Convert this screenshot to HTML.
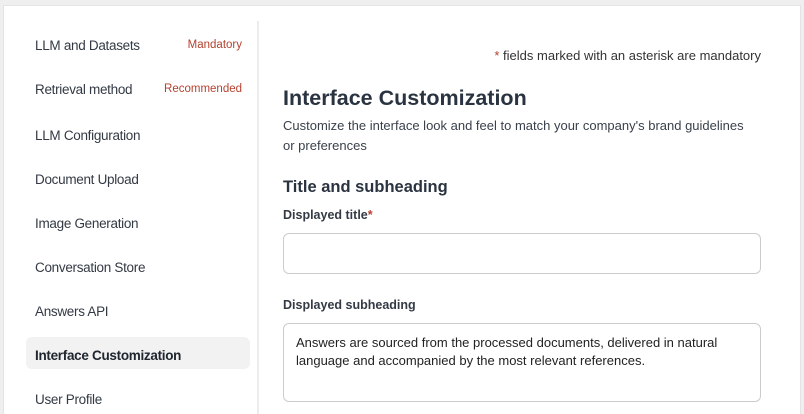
<!DOCTYPE html>
<html><head><meta charset="utf-8"><style>
*{box-sizing:border-box;margin:0;padding:0}
html,body{width:804px;height:414px;overflow:hidden}
body{background:#efefef;font-family:"Liberation Sans",sans-serif;position:relative;color:#2f3540}
.card{position:absolute;left:3px;top:5px;width:798px;height:409px;background:#fff;border:1px solid #e4e4e4;border-bottom:none}
.div{position:absolute;left:257px;top:21px;width:2px;height:393px;background:#ececec}
.nav{position:absolute;left:35px;font-size:13.5px;color:#333a44;letter-spacing:-0.3px}
.tag{position:absolute;font-size:11.5px;color:#b5412e;right:562px}
.active{position:absolute;left:26px;top:337px;width:224px;height:32px;background:#f2f2f2;border-radius:6px}
.r{position:absolute;left:283px}
.box{position:absolute;left:283px;width:478px;border:1px solid #ccc;border-radius:6px}
</style></head><body>
<div class="card"></div>
<div class="div"></div>
<div class="active"></div>
<div class="nav" style="top:38px">LLM and Datasets</div>
<div class="tag" style="top:39px">Mandatory</div>
<div class="nav" style="top:82px">Retrieval method</div>
<div class="tag" style="top:83px">Recommended</div>
<div class="nav" style="top:128px">LLM Configuration</div>
<div class="nav" style="top:172px">Document Upload</div>
<div class="nav" style="top:216px">Image Generation</div>
<div class="nav" style="top:260px">Conversation Store</div>
<div class="nav" style="top:304px">Answers API</div>
<div class="nav" style="top:348px;font-weight:bold;color:#20262e">Interface Customization</div>
<div class="nav" style="top:392px">User Profile</div>
<div style="position:absolute;right:43px;top:48px;font-size:13px;color:#333"><span style="color:#b5412e">*</span> fields marked with an asterisk are mandatory</div>
<div class="r" style="top:86px;font-size:21.5px;font-weight:bold;color:#2a3340">Interface Customization</div>
<div class="r" style="top:116px;font-size:13px;line-height:20px;width:470px;color:#3a414b">Customize the interface look and feel to match your company's brand guidelines or preferences</div>
<div class="r" style="top:178px;font-size:16.5px;font-weight:bold;color:#2a3340">Title and subheading</div>
<div class="r" style="top:208px;font-size:12.5px;font-weight:bold;color:#333a44">Displayed title<span style="color:#b5412e">*</span></div>
<div class="box" style="top:233px;height:41px"></div>
<div class="r" style="top:298px;font-size:12.5px;font-weight:bold;color:#333a44">Displayed subheading</div>
<div class="box" style="top:323px;height:79px;padding:10px 12px;font-size:13px;line-height:18px;color:#222">Answers are sourced from the processed documents, delivered in natural language and accompanied by the most relevant references.</div>
</body></html>
